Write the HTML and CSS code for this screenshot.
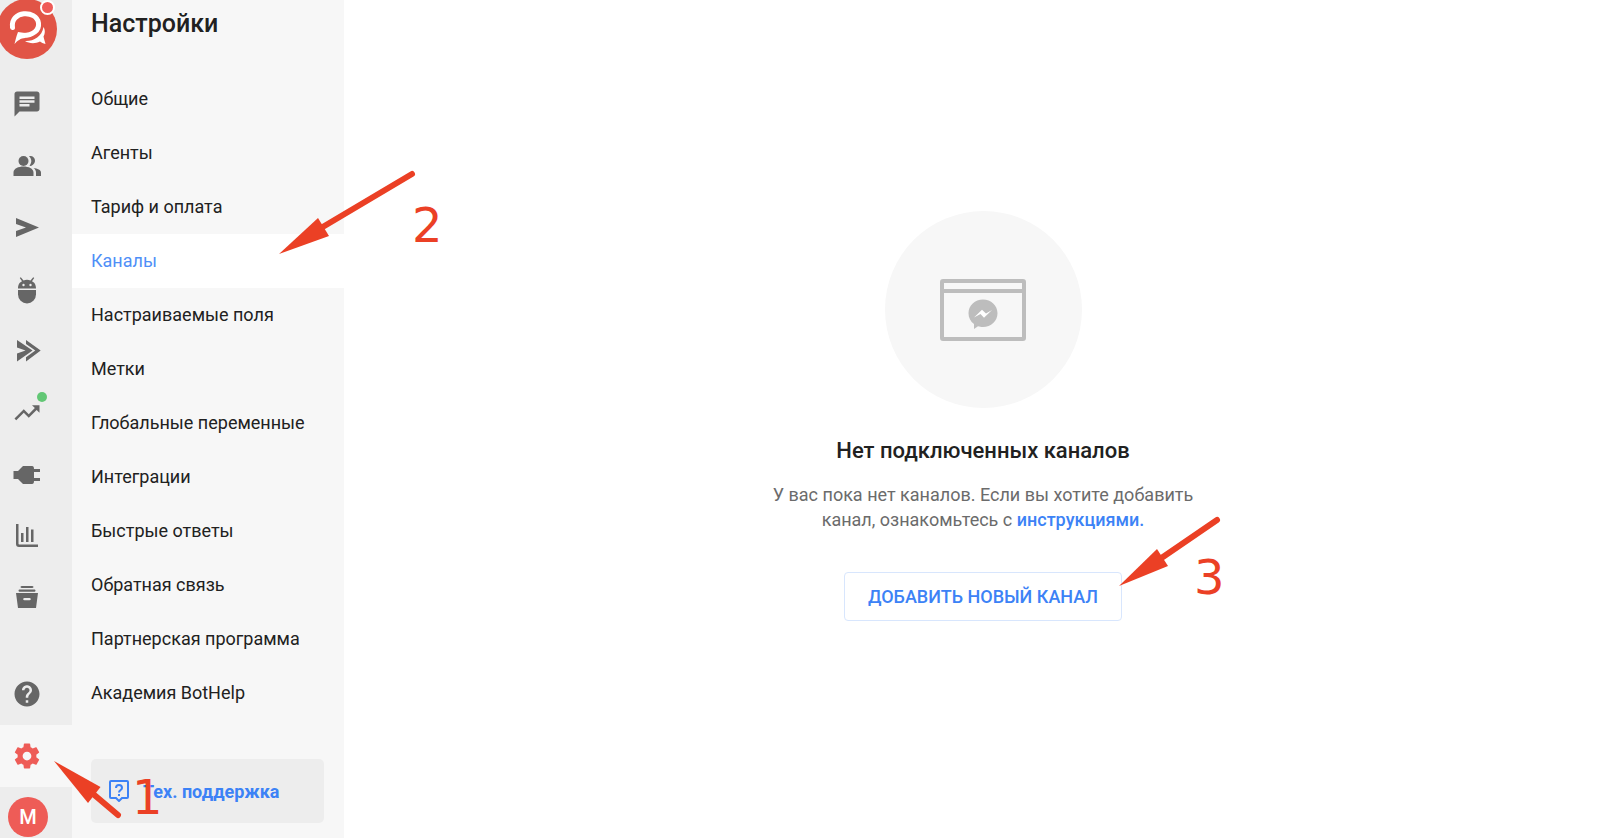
FILE: index.html
```
<!DOCTYPE html>
<html lang="ru">
<head>
  <meta charset="UTF-8">
  <meta name="viewport" content="width=device-width, initial-scale=1.0">
  <title>Настройки - Каналы</title>
  <link rel="stylesheet" href="styles.css">
</head>
<body>
  <div class="app">
    <nav class="rail" aria-label="Разделы">
      <a href="#" class="logo" aria-label="BotHelp">
        <svg viewBox="0 0 60 60">
          <circle cx="30" cy="30" r="30" fill="#e15446"/>
          <path d="M15.500 28.500C13 11.500 39.500 10.500 41.500 24C42.500 31 36 36.500 26 36.500" fill="none" stroke="#fff" stroke-width="5" stroke-linecap="round"/>
          <path d="M21 33L28 34L28 39C24 39 20 42 17.500 45C18.500 41 19 38 21 33Z" fill="#fff"/>
          <path d="M46.500 28C48.500 31 48 35 46.500 37.500C47 40 48 43 48.500 45C46 44.500 44.500 43.500 43 42.500C38 45 32 44.500 28 42C36 42.500 45 38 46.500 28Z" fill="#fff"/>
        </svg>
        <span class="logo-dot"></span>
      </a>
      <a href="#" class="rail-item" aria-label="Диалоги">
        <svg viewBox="0 0 24 24"><path d="M20 2H4c-1.100 0-2 .9-2 2v18l4-4h14c1.100 0 2-.9 2-2V4c0-1.100-.9-2-2-2zM6 9h12v2H6V9zm8 5H6v-2h8v2zm4-6H6V6h12v2z"/></svg>
      </a>
      <a href="#" class="rail-item" aria-label="Подписчики">
        <svg viewBox="0 0 30 30"><circle cx="11.500" cy="10" r="5"/><path d="M1.500 25v-3.500c0-8 20-8 20 0V25zM17 5.300c6-1.600 9 7 2 9.600l-1.500-.2c2.500-3 2.500-6.500-.5-9.400zM21.500 17c4 .5 7.500 2 7.500 4.500V25h-5v-3.500c0-2-1-3.500-2.500-4.500z"/></svg>
      </a>
      <a href="#" class="rail-item" aria-label="Рассылки">
        <svg viewBox="0 0 30 30"><path d="M4 5l23 9.500L4 24v-6l10-3.500L4 11z"/></svg>
      </a>
      <a href="#" class="rail-item" aria-label="Боты">
        <svg viewBox="0 0 30 30"><path d="M6 13.500C6 9 8 7.300 10 6.200L7.800 3l1-.8L11.500 5.500a10 10 0 0 1 7 0l2.700-3.300 1 .8L20 6.200c2 1.100 4 2.800 4 7.300z"/><path d="M6 15h18v4.500a9 9 0 0 1-18 0z"/><circle cx="11.500" cy="10" r="1.200" class="hole"/><circle cx="18.500" cy="10" r="1.200" class="hole"/></svg>
      </a>
      <a href="#" class="rail-item" aria-label="Автоворонки">
        <svg viewBox="0 0 30 30"><path d="M5 3l15.600 10.500L5 24.500v-8l8.500-3L5 10.500zM14 3l14.700 10.500L14 24.500v-4.300l9.300-6.700L14 7z"/></svg>
      </a>
      <a href="#" class="rail-item" aria-label="Инструменты роста">
        <svg viewBox="0 0 24 24"><path d="M16 5l2.290 2.290-4.880 4.880-4-4L2 15.590 3.410 17l6-6 4 4 6.300-6.290L22 11V5z"/></svg>
        <span class="rail-dot"></span>
      </a>
      <a href="#" class="rail-item" aria-label="Интеграции">
        <svg viewBox="0 0 30 30"><path d="M1.500 10H6l5-5h9c1.500 0 2 1 2 3h6v3h-6v6h6v3h-6c0 2-.5 3-2 3h-9l-5-5H1.500z"/></svg>
      </a>
      <a href="#" class="rail-item" aria-label="Аналитика">
        <svg viewBox="0 0 30 30"><path d="M4 1h2.500v19.500c0 .7.300 1 1 1H26V24H7c-2 0-3-1-3-3zM9 10h2.500v9H9zM14 4h2.500v15H14zM19 6.500h2.500V19H19z"/></svg>
      </a>
      <a href="#" class="rail-item" aria-label="Архив">
        <svg viewBox="0 0 30 30"><path d="M10 1h10c2 0 2 2 0 2H10c-2 0-2-2 0-2zM8 4.500h14c2 0 2 2.300 0 2.300H8C6 6.800 6 4.500 8 4.500zM4 8h22L24 23H6zM12.500 13c-1.700 0-1.700 2.300 0 2.300h5c1.700 0 1.700-2.300 0-2.300z" fill-rule="evenodd"/></svg>
      </a>
      <a href="#" class="rail-item rail-help" aria-label="Помощь">
        <svg viewBox="0 0 24 24"><path d="M12 2C6.480 2 2 6.480 2 12s4.480 10 10 10 10-4.480 10-10S17.520 2 12 2zm1 17h-2v-2h2v2zm2.070-7.750l-.9.920C13.450 12.900 13 13.500 13 15h-2v-.5c0-1.100.45-2.100 1.170-2.830l1.240-1.260c.37-.36.590-.86.590-1.410 0-1.100-.9-2-2-2s-2 .9-2 2H8c0-2.210 1.790-4 4-4s4 1.790 4 4c0 .88-.36 1.680-.93 2.250z"/></svg>
      </a>
      <a href="#" class="rail-item rail-active" aria-label="Настройки">
        <svg viewBox="0 0 24 24"><path d="M19.430 12.980c.04-.32.070-.64.070-.98s-.03-.66-.07-.98l2.110-1.650c.19-.15.240-.42.120-.64l-2-3.460c-.12-.22-.39-.3-.61-.22l-2.490 1c-.52-.4-1.080-.73-1.690-.98l-.38-2.650C14.460 2.180 14.250 2 14 2h-4c-.25 0-.46.180-.49.420l-.38 2.650c-.61.250-1.170.590-1.690.980l-2.490-1c-.23-.09-.49 0-.61.220l-2 3.460c-.13.220-.07.490.12.640l2.110 1.650c-.04.320-.07.650-.07.980s.03.660.07.980l-2.110 1.650c-.19.150-.24.420-.12.640l2 3.460c.12.220.39.300.61.220l2.490-1c.52.400 1.080.730 1.690.980l.38 2.650c.03.240.24.420.49.420h4c.25 0 .46-.18.490-.42l.38-2.650c.61-.25 1.170-.59 1.690-.98l2.490 1c.23.090.49 0 .61-.22l2-3.460c.12-.22.070-.49-.12-.64l-2.110-1.650zM12 15.500c-1.930 0-3.500-1.570-3.500-3.500s1.570-3.500 3.500-3.500 3.500 1.570 3.500 3.500-1.570 3.500-3.500 3.500z"/></svg>
        <span class="mark mark-1">
          <svg width="70" height="60" viewBox="0 0 70 60"><path d="M0 0L46.500 26L34 42z"/><path d="M38 32L64 54" class="tail"/></svg>
          <b>1</b>
        </span>
      </a>
      <a href="#" class="rail-user"><span class="avatar">M</span></a>
    </nav>

    <aside class="sidebar">
      <h1>Настройки</h1>
      <ul class="menu">
        <li><a href="#">Общие</a></li>
        <li><a href="#">Агенты</a></li>
        <li><a href="#">Тариф и оплата</a></li>
        <li class="current">
          <a href="#">Каналы</a>
          <span class="mark mark-2">
            <svg width="140" height="90" viewBox="0 0 140 90"><path d="M0 81L39 45L50 63z"/><path d="M42 55L133 1" class="tail"/></svg>
            <b>2</b>
          </span>
        </li>
        <li><a href="#">Настраиваемые поля</a></li>
        <li><a href="#">Метки</a></li>
        <li><a href="#">Глобальные переменные</a></li>
        <li><a href="#">Интеграции</a></li>
        <li><a href="#">Быстрые ответы</a></li>
        <li><a href="#">Обратная связь</a></li>
        <li><a href="#">Партнерская программа</a></li>
        <li><a href="#">Академия BotHelp</a></li>
      </ul>
      <button class="support" type="button">
        <svg width="20" height="22" viewBox="0 0 20 22" fill="none" stroke="#3c82f6" stroke-width="2"><path d="M2 1h16c.6 0 1 .4 1 1v15c0 .6-.4 1-1 1h-5l-3 3-3-3H2c-.6 0-1-.4-1-1V2c0-.6.400-1 1-1z"/><path d="M7 8c0-4 6-4 6 0 0 2-3 2-3 4.500M10 14v2"/></svg>
        <span>Тех. поддержка</span>
      </button>
    </aside>

    <main class="content">
      <div class="picture">
        <svg width="86" height="62" viewBox="0 0 86 62">
          <rect x="2" y="2" width="82" height="58" rx="1" fill="none" stroke="#bdbdbd" stroke-width="4"/>
          <path d="M2 12h82" stroke="#bdbdbd" stroke-width="4"/>
          <path d="M43 20.500c8 0 14.500 6 14.500 13.700S51 48 43 48c-2 0-3.500-.3-5-.8L34 50v-5c-3.500-2.600-5.500-6.300-5.500-10.800 0-7.700 6.500-13.700 14.500-13.700z" fill="#bdbdbd"/>
          <path d="M34 38.500l8-7.800 4 3.800 6-3.500-8 7.800-3.500-3.800z" fill="#fff"/>
        </svg>
      </div>
      <h2>Нет подключенных каналов</h2>
      <p>У вас пока нет каналов. Если вы хотите добавить<br>канал, ознакомьтесь с <a href="#">инструкциями.</a></p>
      <div class="action">
        <button class="add" type="button">ДОБАВИТЬ НОВЫЙ КАНАЛ</button>
        <span class="mark mark-3">
          <svg width="110" height="80" viewBox="0 0 110 80"><path d="M0 70L38 33L49 50z"/><path d="M41 43L98 4" class="tail"/></svg>
          <b>3</b>
        </span>
      </div>
    </main>
  </div>
</body>
</html>
```
FILE: styles.css
```
* {
  box-sizing: border-box;
}

body {
  margin: 0;
  font-family: Roboto, Arial, sans-serif;
  font-size: 18px;
  color: #212121;
  background-color: #fff;
}

a {
  color: inherit;
  text-decoration: none;
}

button {
  font-family: inherit;
  font-size: 18px;
  color: #3c82f6;
  cursor: pointer;
}

.app {
  display: flex;
  height: 100vh;
  overflow: hidden;
}

/* icon rail */
.rail {
  display: flex;
  flex-direction: column;
  flex: 0 0 72px;
  background-color: #ededed;
}

.logo {
  position: relative;
  flex: 0 0 60px;
  width: 60px;
  margin: -1px 0 14px -3px;
}

.logo svg {
  display: block;
  width: 60px;
  height: 60px;
}

.logo-dot {
  position: absolute;
  top: 1px;
  right: 2px;
  width: 15px;
  height: 15px;
  border: 2px solid #fff;
  border-radius: 50%;
  background-color: #ef5b58;
}

.rail-item {
  position: relative;
  display: flex;
  align-items: center;
  flex: 0 0 62px;
  padding-left: 12px;
}

.rail-item > svg {
  width: 30px;
  height: 30px;
  fill: #666;
}

.rail-item .hole {
  fill: #ededed;
}

.rail-dot {
  position: absolute;
  top: 9px;
  left: 37px;
  width: 10px;
  height: 10px;
  border-radius: 50%;
  background-color: #62c775;
}

.rail-help {
  margin-top: 32px;
}

.rail-active {
  background-color: #f7f7f7;
}

.rail-active > svg {
  fill: #ee5c57;
}

.rail-user {
  padding: 10px 8px 0;
}

.avatar {
  display: flex;
  align-items: center;
  justify-content: center;
  width: 40px;
  height: 40px;
  border-radius: 50%;
  background-color: #ee5c57;
  color: #fff;
  font-size: 20px;
  font-weight: 500;
}

/* settings menu */
.sidebar {
  flex: 0 0 272px;
  background-color: #f7f7f7;
}

h1 {
  margin: 0;
  padding: 8px 19px 0;
  height: 72px;
  font-size: 25px;
  line-height: 32px;
  font-weight: 500;
}

.menu {
  list-style: none;
  margin: 0;
  padding: 0;
}

.menu li {
  position: relative;
}

.menu li > a {
  display: block;
  padding: 0 19px;
  line-height: 54px;
}

.menu .current {
  background-color: #fff;
  color: #4f8ff7;
}

.support {
  display: flex;
  align-items: center;
  gap: 14px;
  width: 233px;
  height: 64px;
  margin: 39px 19px 0;
  padding: 0 18px;
  border: 0;
  border-radius: 5px;
  background-color: #ededed;
  font-weight: 700;
}

/* empty state */
.content {
  display: flex;
  flex-direction: column;
  align-items: center;
  justify-content: center;
  flex: 1;
  padding: 0 0 6px 20px;
  text-align: center;
}

.picture {
  display: flex;
  align-items: center;
  justify-content: center;
  width: 197px;
  height: 197px;
  border-radius: 50%;
  background-color: #f7f7f7;
}

h2 {
  margin: 28px 0 16px;
  font-size: 22px;
  line-height: 30px;
  font-weight: 500;
}

.content p {
  margin: 0 0 40px;
  line-height: 25px;
  color: #6b6b6b;
}

.content p a {
  color: #3c82f6;
  font-weight: 500;
}

.action {
  position: relative;
}

.add {
  height: 49px;
  padding: 0 23px;
  border: 1px solid #d8e6fd;
  border-radius: 4px;
  background-color: #fff;
  font-weight: 500;
}

/* numbered arrows over the page */
.mark {
  position: absolute;
  z-index: 2;
  color: #eb4025;
  pointer-events: none;
}

.mark svg {
  display: block;
  overflow: visible;
  fill: #eb4025;
}

.mark .tail {
  fill: none;
  stroke: #eb4025;
  stroke-width: 6;
  stroke-linecap: round;
}

.mark b {
  position: absolute;
  font: 48px/48px "DejaVu Sans", Verdana, sans-serif;
}

.mark-1 {
  top: 36px;
  left: 54px;
}

.mark-1 b {
  top: 12px;
  left: 78px;
}

.mark-2 {
  top: -61px;
  left: 207px;
}

.mark-2 b {
  top: 28px;
  left: 133px;
}

.mark-3 {
  top: -56px;
  left: 100%;
  margin-left: -3px;
}

.mark-3 b {
  top: 37px;
  left: 75px;
}
```
